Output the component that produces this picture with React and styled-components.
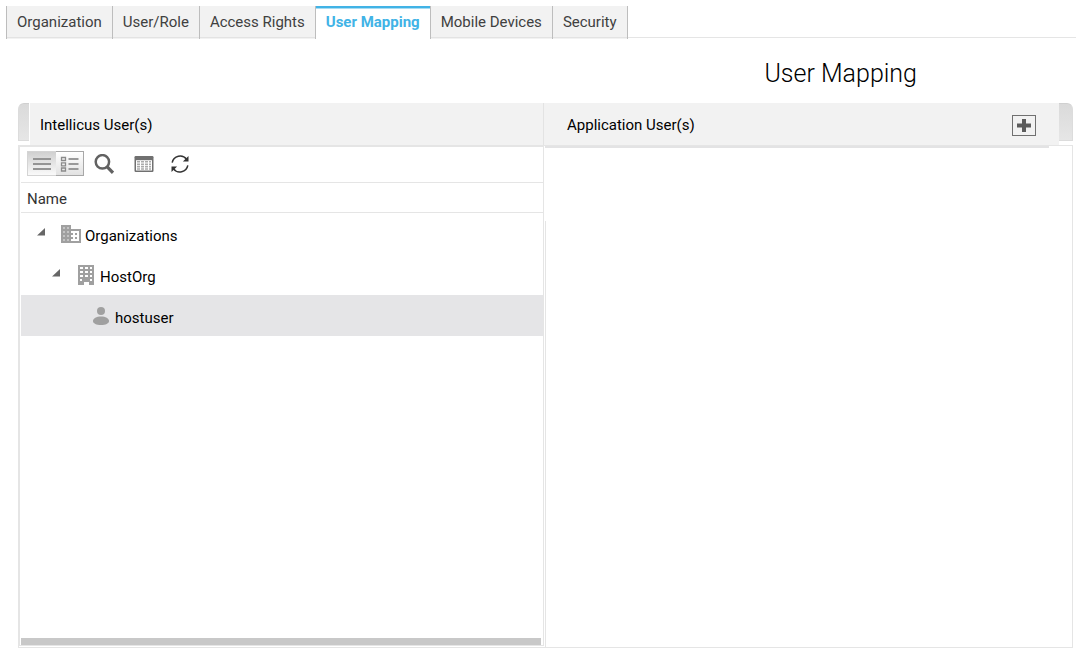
import React, { useState } from "react";
import styled, { createGlobalStyle } from "styled-components";

const GlobalStyle = createGlobalStyle`
  * {
    box-sizing: border-box;
  }
  body {
    margin: 0;
    background-color: #fff;
    color: #000;
    font-family: Roboto, "Liberation Sans", sans-serif;
    font-size: 15px;
    line-height: 20px;
  }
  button {
    font: inherit;
    color: inherit;
    padding: 0;
    border: 0;
    background: none;
    cursor: pointer;
  }
  svg {
    display: block;
  }
`;
const Page = styled.div`
  min-height: 100vh;
  display: flex;
  flex-direction: column;
`;
const TabBar = styled.nav`
  display: flex;
  height: 32px;
  margin: 6px 0 0 6px;
  border-bottom: 1px solid #e5e5e5;
`;
const Tab = styled.button`
  && {
    height: 33px;
    flex: none;
    padding: 0 10px 1px;
    border-left: 1px solid #bdbdbd;
    color: ${(p) => (p.$active ? "#41b3e6" : "#404040")};
    font-weight: ${(p) => (p.$active ? 700 : 400)};
    background: ${(p) =>
      p.$active
        ? "#fff"
        : "linear-gradient(#e3e3e3, #e3e3e3) 0 31px / 100% 1px no-repeat #f2f2f2"};
    box-shadow: ${(p) =>
      p.$active ? "inset 0 2px #41b3e6, inset 0 3px #a6dcf3" : "none"};
  }
  &&:last-child {
    border-right: 1px solid #bdbdbd;
  }
`;
const Title = styled.h1`
  margin: 20px 159px 13px 0;
  text-align: right;
  font-size: 25px;
  line-height: 32px;
  font-weight: 300;
`;
const Columns = styled.main`
  flex: 1;
  display: grid;
  grid-template-columns: 527fr 528fr;
  margin: 0 3px 5px 18px;
`;
const Column = styled.section`
  min-width: 0;
  display: flex;
  flex-direction: column;
`;
const HeadRow = styled.div`
  display: flex;
  height: 42px;
`;
const Cap = styled.div`
  width: ${(p) => (p.$right ? "14px" : "11px")};
  height: 38px;
  margin-right: ${(p) => (p.$right ? 0 : "1px")};
  border: 1px solid #dcdcdc;
  border-top-color: #d0d0d0;
  border-radius: ${(p) => (p.$right ? "0 6px 0 0" : "6px 0 0 0")};
  border-${(p) => (p.$right ? "left" : "right")}: 0;
  background: linear-gradient(#dadada, #e6e6e6);
`;
const Head = styled.header`
  flex: 1;
  display: flex;
  align-items: center;
  justify-content: space-between;
  padding: ${(p) => p.$pad};
  background-color: #f2f2f2;
`;
const HeadText = styled.h2`
  margin: 0;
  padding-top: 2px;
  font-size: 15px;
  font-weight: 400;
`;
const HeadDivider = styled.div`
  width: 2px;
  border-left: 1px solid #e3e3e3;
  background-color: #f2f2f2;
`;
const AddButton = styled.button`
  && {
    width: 24px;
    height: 21px;
    margin-top: 3px;
    display: grid;
    place-items: center;
    border: 1px solid #707070;
  }
`;
const LeftFrame = styled.div`
  flex: 1;
  display: flex;
  border: 1px solid #e5e5e5;
  border-right: 0;
  padding: 0 1px 1px 0;
`;
const TreePanel = styled.div`
  flex: 1;
  display: flex;
  flex-direction: column;
  border: 1px solid #e5e5e5;
  padding-left: 1px;
`;
const Toolbar = styled.div`
  display: flex;
  align-items: center;
  height: 36px;
  padding: 0 6px 2px;
  border-bottom: 1px solid #e5e5e5;
`;
const Toggle = styled.button`
  && {
    width: ${(p) => (p.$pressed ? "29px" : "28px")};
    height: 25px;
    display: grid;
    place-items: center;
    border: 1px solid ${(p) => (p.$pressed ? "#d4d4d4" : "#a8a8a8")};
    ${(p) => p.$pressed && "border-right: 0;"}
    ${(p) => !p.$pressed && "border-left: 0;"}
    background: ${(p) =>
      p.$pressed
        ? "linear-gradient(#d0d0d0, #fafafa)"
        : "linear-gradient(#fff, #e2e2e2)"};
  }
`;
const Tool = styled.button`
  && {
    width: 20px;
    height: 20px;
    display: grid;
    place-items: center;
    margin-left: ${(p) => p.$gap};
  }
`;
const NameHead = styled.div`
  padding: 6px 6px 3px;
  border-bottom: 1px solid #e5e5e5;
  color: #333;
`;
const Tree = styled.ul`
  list-style: none;
  flex: 1;
  margin: 0;
  padding: 0;
`;
const TreeRow = styled.li`
  display: flex;
  align-items: center;
  height: 41px;
  padding-left: ${(p) => 16 + p.$depth * 15}px;
  cursor: pointer;
  background-color: ${(p) => (p.$selected ? "#e5e5e7" : "transparent")};
`;
const Expander = styled.button`
  && {
    width: 8px;
    height: 12px;
    margin-right: 16px;
    display: grid;
    align-items: start;
  }
`;
const ExpanderSpace = styled.span`
  width: 24px;
`;
const IconBox = styled.span`
  width: 20px;
  height: 20px;
  display: grid;
  place-items: center;
`;
const Label = styled.span`
  padding: 4px 0 0 4px;
`;
const ScrollThumb = styled.div`
  height: 7px;
  margin-right: 2px;
  background-color: #c8c8c8;
`;
const RightFrame = styled.div`
  flex: 1;
  display: flex;
  flex-direction: column;
  border: 1px solid #e5e5e5;
  border-left: 0;
`;
const Strip = styled.div`
  height: 2px;
  margin: 0 23px 73px 0;
  background-color: #e3e3e4;
`;
const UserArea = styled.div`
  flex: 1;
  border-left: 1px solid #e5e5e5;
`;

const PlusIcon = () => (
  <svg width="16" height="15" viewBox="0 0 16 15">
    <path d="M6 1h4v4.500h5v4h-5v4.500H6V9.500H1v-4h5z" fill="#5c5c5c" />
  </svg>
);
const ListIcon = () => (
  <svg width="20" height="16" viewBox="0 0 20 16" stroke="#949494" strokeWidth="2">
    <path d="M1 3h18M1 8h18M1 13h18" />
  </svg>
);
const DetailIcon = () => (
  <svg width="20" height="16" viewBox="0 0 20 16" stroke="#8a8a8a" fill="none">
    <path d="M1.500 1.500h4v3h-4zM1.500 6.800h4v3h-4zM1.500 12h4v3h-4z" strokeWidth="1.300" />
    <path d="M8.500 3h10M8.500 8h10M8.500 13h10" strokeWidth="1.800" stroke="#999" />
  </svg>
);
const SearchIcon = () => (
  <svg width="20" height="20" viewBox="0 0 20 20" fill="none" stroke="#626262">
    <circle cx="8.400" cy="7.800" r="6.700" strokeWidth="2.500" />
    <path d="M13 12.600l6 6.200" strokeWidth="3.200" />
  </svg>
);
const TableIcon = () => (
  <svg width="20" height="16" viewBox="0 0 20 16">
    <rect x="0.500" y="0" width="19" height="16" rx="1.200" fill="#707070" />
    <path d="M2 4.200h16V14.500H2z" fill="#fff" />
    <path
      d="M3 5.800h3M7 5.800h3M11 5.800h3M15 5.800h2M3 8.200h3M7 8.200h3M11 8.200h3M15 8.200h2M3 10.600h3M7 10.600h3M11 10.600h3M15 10.600h2M3 13h3M7 13h3M11 13h3M15 13h2"
      stroke="#aaa"
      strokeWidth="1.600"
    />
  </svg>
);
const RefreshIcon = () => (
  <svg width="18" height="18" viewBox="0 0 18 18" fill="none" stroke="#333" strokeWidth="1.500">
    <path d="M1.200 7.600A8 8 0 0 1 15.600 4.400" />
    <path d="M16.800 10.400A8 8 0 0 1 2.400 13.600" />
    <path d="M17.500 1v5.600h-5.600zM0.500 17v-5.600h5.600z" fill="#333" stroke="none" />
  </svg>
);
const OrgsIcon = () => (
  <svg width="20" height="18" viewBox="0 0 20 18">
    <path d="M0 0h10v4h10v14H0z" fill="#a0a0a0" />
    <path
      d="M2 2h2v2H2zM6 2h2v2H6zM2 6h2v2H2zM6 6h2v2H6zM2 10h2v2H2zM6 10h2v2H6zM2 14h2v2H2zM6 14h2v2H6z"
      fill="#c4c4c4"
    />
    <path d="M10 6h8v10h-8v-2h2v-2h-2v-2h2V8h-2z" fill="#fff" />
    <path d="M14 8h2v2h-2zM14 12h2v2h-2z" fill="#a0a0a0" />
  </svg>
);
const BuildingIcon = () => (
  <svg width="16" height="20" viewBox="0 0 16 20">
    <path
      fillRule="evenodd"
      fill="#a0a0a0"
      d="M0 0h16v20h-5v-3H6v3H0zM2 2v2h3V2zM7 2v2h3V2zM12 2v2h2V2zM2 6v2h3V6zM7 6v2h3V6zM12 6v2h2V6zM2 10v2h3v-2zM7 10v2h3v-2zM12 10v2h2v-2zM2 14v2h2v-2zM12 14v2h2v-2z"
    />
  </svg>
);
const UserIcon = () => (
  <svg width="16" height="18" viewBox="0 0 16 18" fill="#a0a0a0">
    <circle cx="8" cy="4" r="4" />
    <path d="M8 9.500c4.600 0 8 2 8 4.500s-3.400 4-8 4-8-1.500-8-4 3.400-4.500 8-4.500z" />
  </svg>
);

const tabs = [
  "Organization",
  "User/Role",
  "Access Rights",
  "User Mapping",
  "Mobile Devices",
  "Security",
];
const nodes = [
  { name: "Organizations", depth: 0, icon: <OrgsIcon />, parent: true },
  { name: "HostOrg", depth: 1, icon: <BuildingIcon />, parent: true },
  { name: "hostuser", depth: 2, icon: <UserIcon /> },
];

const App = () => {
  const [active, setActive] = useState("User Mapping");
  const [selected, setSelected] = useState("hostuser");

  return (
    <Page>
      <GlobalStyle />
      <TabBar>
        {tabs.map((tab) => (
          <Tab key={tab} $active={tab === active} onClick={() => setActive(tab)}>
            {tab}
          </Tab>
        ))}
      </TabBar>
      <Title>User Mapping</Title>
      <Columns>
        <Column>
          <HeadRow>
            <Cap />
            <Head $pad="0 0 0 10px">
              <HeadText>Intellicus User(s)</HeadText>
            </Head>
            <HeadDivider />
          </HeadRow>
          <LeftFrame>
            <TreePanel>
              <Toolbar>
                <Toggle $pressed aria-label="List view">
                  <ListIcon />
                </Toggle>
                <Toggle aria-label="Detail view">
                  <DetailIcon />
                </Toggle>
                <Tool $gap="10px" aria-label="Search">
                  <SearchIcon />
                </Tool>
                <Tool $gap="20px" aria-label="Columns">
                  <TableIcon />
                </Tool>
                <Tool $gap="16px" aria-label="Refresh">
                  <RefreshIcon />
                </Tool>
              </Toolbar>
              <NameHead>Name</NameHead>
              <Tree>
                {nodes.map((node) => (
                  <TreeRow
                    key={node.name}
                    $depth={node.depth}
                    $selected={node.name === selected}
                    onClick={() => setSelected(node.name)}
                  >
                    {node.parent ? (
                      <Expander aria-label={`Collapse ${node.name}`}>
                        <svg width="8" height="8" viewBox="0 0 8 8">
                          <path d="M8 0v7.500H0z" fill="#666" />
                        </svg>
                      </Expander>
                    ) : (
                      <ExpanderSpace />
                    )}
                    <IconBox>{node.icon}</IconBox>
                    <Label>{node.name}</Label>
                  </TreeRow>
                ))}
              </Tree>
              <ScrollThumb />
            </TreePanel>
          </LeftFrame>
        </Column>
        <Column>
          <HeadRow>
            <Head $pad="0 23px 0 22px">
              <HeadText>Application User(s)</HeadText>
              <AddButton aria-label="Add application user">
                <PlusIcon />
              </AddButton>
            </Head>
            <Cap $right />
          </HeadRow>
          <RightFrame>
            <Strip />
            <UserArea />
          </RightFrame>
        </Column>
      </Columns>
    </Page>
  );
};

export default App;
